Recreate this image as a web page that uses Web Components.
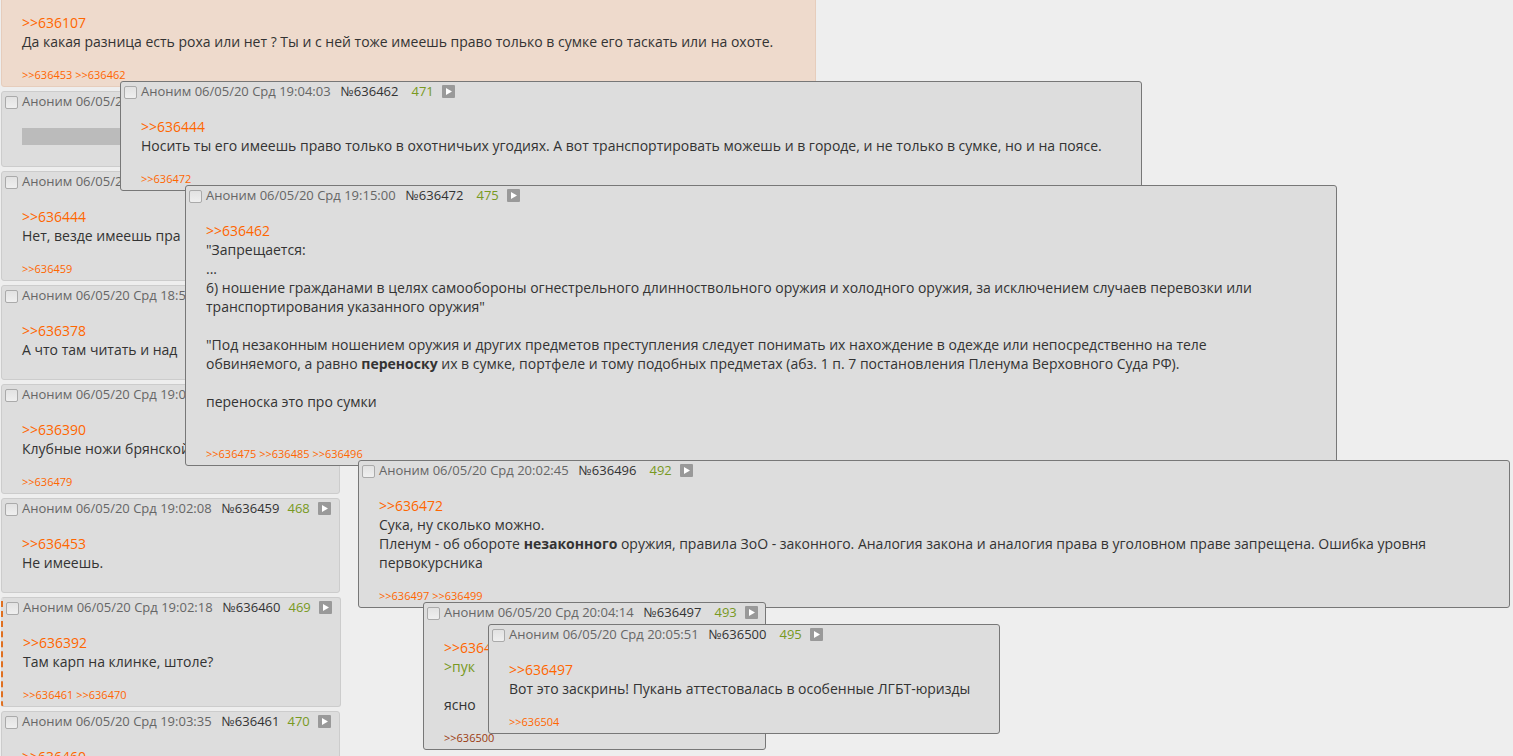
<!DOCTYPE html>
<html lang="ru">
<head>
<meta charset="utf-8">
<title>Тред</title>
<style>
  html, body { margin: 0; height: 100%; }
  body {
    overflow: hidden;
    background: #eee;
    color: #333;
    font: 14px/19px "Open Sans", "Noto Sans", sans-serif;
  }
</style>
</head>
<body>

<template id="t-ref">
  <style>
    :host { display: inline; }
    a { color: var(--ref-color, #f60); text-decoration: none; }
    a:hover { color: #9b3a10; }
  </style>
  <a></a>
</template>

<template id="t-post">
  <style>
    :host {
      display: block;
      box-sizing: border-box;
      position: relative;
      background: #ddd;
      border: 1px solid #ccc;
      border-radius: 3px;
    }
    :host([hidden-info]) header { visibility: hidden; }
    :host([op-mark]) { background: #eedacc; border-color: #e6cdbc; }
    :host([own]) { border-left: 2px dashed #e07020; }
    :host([popup]) { border-color: #777; --index-gap: 5px; }
    header {
      display: flex;
      align-items: center;
      gap: 8px;
      height: 18px;
      padding: 0 6px 0 3px;
      font-size: 13px;
      color: #666;
      white-space: nowrap;
    }
    .who { display: flex; align-items: center; gap: 4px; }
    input {
      appearance: none;
      box-sizing: border-box;
      width: 13px;
      height: 13px;
      margin: 2px 0 0;
      border: 1px solid #aaa;
      border-radius: 2px;
      background: linear-gradient(#e2e2e2, #efefef);
    }
    input:checked { background: #789922; }
    .num { color: #333; text-decoration: none; margin-left: 2px; }
    .index { color: #789922; margin-left: var(--index-gap, 0); }
    button {
      width: 13px;
      height: 13px;
      padding: 0;
      border: 0;
      background: none;
      display: block;
    }
    svg { display: block; }
    .text { margin: 17px 20px 16px; max-width: 1090px; }
    ::slotted(.quote) { color: #789922; }
    ::slotted(.spoiler) {
      display: inline-block;
      width: 280px;
      height: 17px;
      background: #bbb;
      vertical-align: top;
      margin-top: 1px;
    }
    footer { margin: 0 20px; font-size: 11px; line-height: 15px; }
    footer:empty { display: none; }
    .end { height: 4px; }
  </style>
  <header>
    <label class="who"><input type="checkbox"><span class="date"></span></label>
    <a class="num" href="#"></a>
    <span class="index"></span>
    <button type="button" aria-label="Ответить">
      <svg width="13" height="13" viewBox="0 0 13 13"><rect width="13" height="13" rx="1" fill="#999"/><path d="M4 3l6 3.5L4 10z" fill="#fff"/></svg>
    </button>
  </header>
  <div class="text"><slot></slot></div>
  <footer></footer>
  <div class="end"></div>
</template>

<template id="t-thread">
  <style>
    :host {
      display: flex;
      flex-direction: column;
      align-items: flex-start;
      gap: 4px;
      margin: -23px 0 0 1px;
    }
    ::slotted(*) { min-width: 339px; }
    ::slotted([own]) { min-width: 340px; }
    ::slotted([op-mark]) { min-width: 815px; }
  </style>
  <slot></slot>
</template>

<template id="t-popups">
  <style>
    :host { display: block; }
    ::slotted(*) { position: absolute; left: var(--x); top: var(--y); width: var(--w); }
  </style>
  <slot></slot>
</template>

<script>
  class TemplateElement extends HTMLElement {
    connectedCallback() {
      if (this.shadowRoot) return;
      const tpl = document.getElementById(this.constructor.template);
      this.attachShadow({ mode: "open" }).append(tpl.content.cloneNode(true));
      this.fill(this.shadowRoot);
    }
    fill() {}
  }

  class PostRef extends TemplateElement {
    static template = "t-ref";
    fill(root) {
      const a = root.querySelector("a");
      const num = this.getAttribute("num");
      a.href = "#" + num;
      a.textContent = ">>" + num;
    }
  }

  class ThreadPost extends TemplateElement {
    static template = "t-post";
    fill(root) {
      const get = name => this.getAttribute(name) || "";
      root.querySelector(".date").textContent = "Аноним 06/05/20 Срд" + (get("time") && " " + get("time"));
      const num = root.querySelector(".num");
      if (get("num")) {
        num.textContent = "№" + get("num");
        num.href = "#" + get("num");
        root.querySelector(".index").textContent = get("index");
      } else {
        for (const s of [".num", ".index", "button"]) root.querySelector(s).remove();
      }
      const footer = root.querySelector("footer");
      get("replies").split(" ").filter(Boolean).forEach((n, i) => {
        const ref = document.createElement("post-ref");
        ref.setAttribute("num", n);
        if (n === get("active")) ref.style.setProperty("--ref-color", "#9b3a10");
        if (i) footer.append(" ");
        footer.append(ref);
      });
    }
  }

  class ThreadList extends TemplateElement { static template = "t-thread"; }
  class PopupLayer extends TemplateElement { static template = "t-popups"; }

  customElements.define("post-ref", PostRef);
  customElements.define("thread-post", ThreadPost);
  customElements.define("thread-list", ThreadList);
  customElements.define("popup-layer", PopupLayer);
</script>

<thread-list>
  <thread-post op-mark hidden-info replies="636453 636462"><post-ref num="636107"></post-ref><br>Да какая разница есть роха или нет ? Ты и с ней тоже имеешь право только в сумке его таскать или на охоте.</thread-post>
  <thread-post><span class="spoiler"></span></thread-post>
  <thread-post replies="636459"><post-ref num="636444"></post-ref><br>Нет, везде имеешь пра</thread-post>
  <thread-post time="18:5"><post-ref num="636378"></post-ref><br>А что там читать и над</thread-post>
  <thread-post time="19:0" replies="636479"><post-ref num="636390"></post-ref><br>Клубные ножи брянской</thread-post>
  <thread-post time="19:02:08" num="636459" index="468"><post-ref num="636453"></post-ref><br>Не имеешь.</thread-post>
  <thread-post own time="19:02:18" num="636460" index="469" replies="636461 636470"><post-ref num="636392"></post-ref><br>Там карп на клинке, штоле?</thread-post>
  <thread-post time="19:03:35" num="636461" index="470"><post-ref num="636460"></post-ref><br></thread-post>
</thread-list>

<popup-layer>
  <thread-post popup style="--x:120px;--y:81px;--w:1022px" time="19:04:03" num="636462" index="471" replies="636472"><post-ref num="636444"></post-ref><br>Носить ты его имеешь право только в охотничьих угодиях. А вот транспортировать можешь и в городе, и не только в сумке, но и на поясе.</thread-post>
  <thread-post popup style="--x:185px;--y:185px;--w:1152px" time="19:15:00" num="636472" index="475" replies="636475 636485 636496"><post-ref num="636462"></post-ref><br>"Запрещается:<br>...<br>6) ношение гражданами в целях самообороны огнестрельного длинноствольного оружия и холодного оружия, за исключением случаев перевозки или транспортирования указанного оружия"<br><br>"Под незаконным ношением оружия и других предметов преступления следует понимать их нахождение в одежде или непосредственно на теле обвиняемого, а равно <strong>переноску</strong> их в сумке, портфеле и тому подобных предметах (абз. 1 п. 7 постановления Пленума Верховного Суда РФ).<br><br>переноска это про сумки<br><br></thread-post>
  <thread-post popup style="--x:358px;--y:460px;--w:1152px" time="20:02:45" num="636496" index="492" replies="636497 636499"><post-ref num="636472"></post-ref><br>Сука, ну сколько можно.<br>Пленум - об обороте <strong>незаконного</strong> оружия, правила ЗоО - законного. Аналогия закона и аналогия права в уголовном праве запрещена. Ошибка уровня первокурсника</thread-post>
  <thread-post popup style="--x:423px;--y:602px;--w:343px" time="20:04:14" num="636497" index="493" replies="636500" active="636500"><post-ref num="636496"></post-ref><br><span class="quote">&gt;пук</span><br><br>ясно</thread-post>
  <thread-post popup style="--x:488px;--y:624px;--w:512px" time="20:05:51" num="636500" index="495" replies="636504"><post-ref num="636497"></post-ref><br>Вот это заскринь! Пукань аттестовалась в особенные ЛГБТ-юризды</thread-post>
</popup-layer>

</body>
</html>
